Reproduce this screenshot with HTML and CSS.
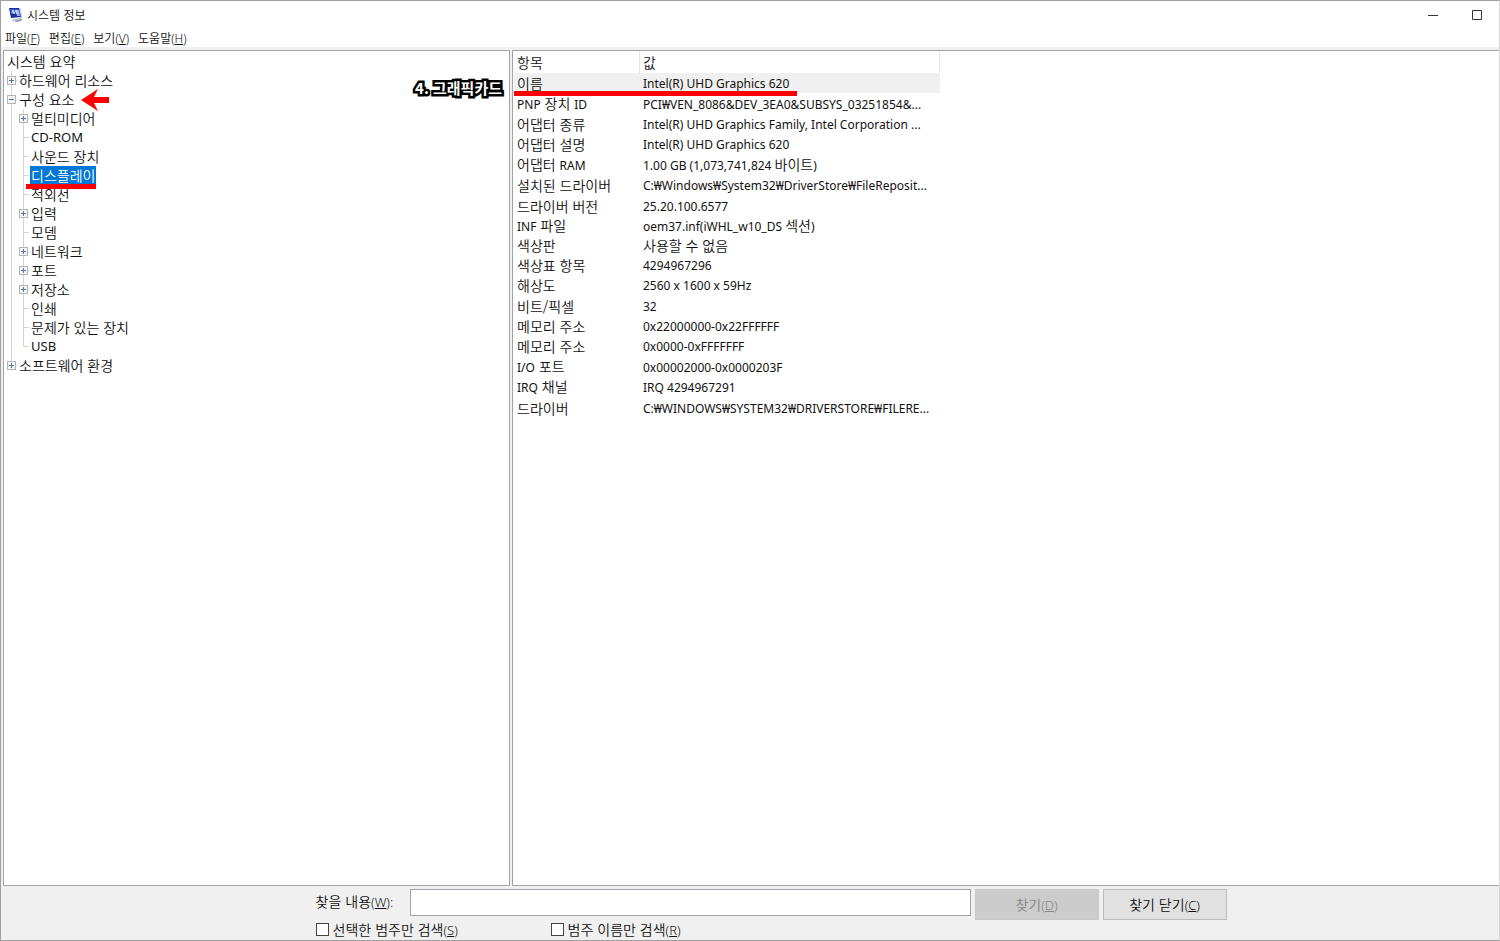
FILE: index.html
```html
<!DOCTYPE html>
<html lang="ko">
<head>
<meta charset="UTF-8">
<title>시스템 정보</title>
<link rel="stylesheet" href="styles.css">
</head>
<body>
<div class="window">
   <header class="titlebar">
      <svg class="app-icon" viewBox="0 0 16 16" width="16" height="16" aria-hidden="true">
         <path d="M5 12l8-1 2 2-6 2-5-1z" fill="#c3c7d2"/>
         <path d="M7 14l6-2 1 1-5 2z" fill="#8c90a4"/>
         <path d="M11 1l2 1 1 9-2 0z" fill="#c8cee4"/>
         <path d="M1 1l10 0 2 9-10 1z" fill="#1b2f9c"/>
         <path d="M2 2l8 0 1 4-8 1z" fill="#3558cf"/>
         <path d="M8 3l3 0 1 6-3 0z" fill="#8fb0f5"/>
         <path d="M4 6l1-3 1 4 2-4 1 4 1-2" fill="none" stroke="#d3e0ff"/>
      </svg>
      <h1>시스템 정보</h1>
      <div class="window-buttons">
         <button type="button" aria-label="최소화"><svg viewBox="0 0 12 12" width="12" height="12"><path d="M1 6.500h10" stroke="#333" fill="none"/></svg></button>
         <button type="button" aria-label="최대화"><svg viewBox="0 0 12 12" width="12" height="12"><path d="M1.500 1.500h9v9h-9z" stroke="#333" fill="none"/></svg></button>
      </div>
   </header>
   <nav class="menubar">
      <button type="button">파일<span class="key">(<u>F</u>)</span></button>
      <button type="button">편집<span class="key">(<u>E</u>)</span></button>
      <button type="button">보기<span class="key">(<u>V</u>)</span></button>
      <button type="button">도움말<span class="key">(<u>H</u>)</span></button>
   </nav>
   <main class="panes">
      <section class="pane tree-pane">
         <a class="root" href="#">시스템 요약</a>
         <ul class="tree">
            <li><button type="button" class="toggle" aria-label="펼치기"></button><a href="#">하드웨어 리소스</a></li>
            <li><button type="button" class="toggle open" aria-label="접기"></button><a href="#">구성 요소</a><svg class="arrow" viewBox="0 0 28 22" width="28" height="22" aria-hidden="true"><path d="M0 11L17 0L13 8H28V14H13L17 22Z" fill="#f00"/></svg>
               <ul class="tree">
                  <li><button type="button" class="toggle" aria-label="펼치기"></button><a href="#">멀티미디어</a></li>
                  <li><a href="#" class="latin">CD-ROM</a></li>
                  <li><a href="#">사운드 장치</a></li>
                  <li><a href="#" class="selected">디스플레이</a></li>
                  <li><a href="#">적외선</a></li>
                  <li><button type="button" class="toggle" aria-label="펼치기"></button><a href="#">입력</a></li>
                  <li><a href="#">모뎀</a></li>
                  <li><button type="button" class="toggle" aria-label="펼치기"></button><a href="#">네트워크</a></li>
                  <li><button type="button" class="toggle" aria-label="펼치기"></button><a href="#">포트</a></li>
                  <li><button type="button" class="toggle" aria-label="펼치기"></button><a href="#">저장소</a></li>
                  <li><a href="#">인쇄</a></li>
                  <li><a href="#">문제가 있는 장치</a></li>
                  <li><a href="#" class="latin">USB</a></li>
               </ul>
            </li>
            <li><button type="button" class="toggle" aria-label="펼치기"></button><a href="#">소프트웨어 환경</a></li>
         </ul>
         <p class="caption">4. 그래픽카드</p>
      </section>
      <section class="pane">
         <table class="details">
            <thead>
               <tr><th>항목</th><th>값</th></tr>
            </thead>
            <tbody>
               <tr class="current"><td>이름</td><td><span class="latin">Intel(R) UHD Graphics 620</span></td></tr>
               <tr><td><span class="latin">PNP</span> 장치 <span class="latin">ID</span></td><td><span class="latin">PCI₩VEN_8086&amp;DEV_3EA0&amp;SUBSYS_03251854&amp;...</span></td></tr>
               <tr><td>어댑터 종류</td><td><span class="latin">Intel(R) UHD Graphics Family, Intel Corporation ...</span></td></tr>
               <tr><td>어댑터 설명</td><td><span class="latin">Intel(R) UHD Graphics 620</span></td></tr>
               <tr><td>어댑터 <span class="latin">RAM</span></td><td><span class="latin">1.00 GB (1,073,741,824 </span>바이트<span class="latin">)</span></td></tr>
               <tr><td>설치된 드라이버</td><td><span class="latin">C:₩Windows₩System32₩DriverStore₩FileReposit...</span></td></tr>
               <tr><td>드라이버 버전</td><td><span class="latin">25.20.100.6577</span></td></tr>
               <tr><td><span class="latin">INF</span> 파일</td><td><span class="latin">oem37.inf(iWHL_w10_DS </span>섹션<span class="latin">)</span></td></tr>
               <tr><td>색상판</td><td>사용할 수 없음</td></tr>
               <tr><td>색상표 항목</td><td><span class="latin">4294967296</span></td></tr>
               <tr><td>해상도</td><td><span class="latin">2560 x 1600 x 59Hz</span></td></tr>
               <tr><td>비트/픽셀</td><td><span class="latin">32</span></td></tr>
               <tr><td>메모리 주소</td><td><span class="latin">0x22000000-0x22FFFFFF</span></td></tr>
               <tr><td>메모리 주소</td><td><span class="latin">0x0000-0xFFFFFFF</span></td></tr>
               <tr><td><span class="latin">I/O</span> 포트</td><td><span class="latin">0x00002000-0x0000203F</span></td></tr>
               <tr><td><span class="latin">IRQ</span> 채널</td><td><span class="latin">IRQ 4294967291</span></td></tr>
               <tr><td>드라이버</td><td><span class="latin">C:₩WINDOWS₩SYSTEM32₩DRIVERSTORE₩FILERE...</span></td></tr>
            </tbody>
         </table>
      </section>
   </main>
   <form class="search">
      <div class="search-row">
         <label for="find">찾을 내용<span class="key">(<u>W</u>):</span></label>
         <input type="text" id="find" name="find">
         <button type="button" disabled>찾기<span class="key">(<u>D</u>)</span></button>
         <button type="button">찾기 닫기<span class="key">(<u>C</u>)</span></button>
      </div>
      <div class="search-options">
         <label><input type="checkbox" name="selected">선택한 범주만 검색<span class="key">(<u>S</u>)</span></label>
         <label><input type="checkbox" name="names">범주 이름만 검색<span class="key">(<u>R</u>)</span></label>
      </div>
   </form>
</div>
</body>
</html>
```
FILE: styles.css
```css
* {
  box-sizing: border-box;
}
body {
  margin: 0;
  font-family: "Noto Sans CJK KR", sans-serif;
  font-size: 14px;
  font-weight: 350;
  line-height: 19px;
  color: #111;
}
button, input {
  font: inherit;
  color: inherit;
}
a {
  color: inherit;
  text-decoration: none;
}
ul {
  list-style: none;
  margin: 0;
  padding: 0;
}
.latin {
  font-family: "Noto Sans", "Noto Sans CJK KR", sans-serif;
  font-size: 12px;
  font-weight: 400;
}
.key {
  font-family: "Noto Sans", sans-serif;
  font-size: 12px;
}
.window {
  display: flex;
  flex-direction: column;
  height: 100vh;
  border: 1px solid #a0a0a0;
  border-right-color: #d8d8d8;
  background: #f0f0f0;
}
.titlebar {
  display: flex;
  align-items: center;
  height: 27px;
  padding-left: 7px;
  background: #fff;
}
.titlebar h1 {
  flex: 1;
  margin: 0 0 0 3px;
  font-size: 12px;
  font-weight: 350;
}
.window-buttons {
  display: flex;
  gap: 32px;
  padding-right: 16px;
}
.window-buttons button {
  display: flex;
  padding: 0;
  border: 0;
  background: none;
}
.menubar {
  display: flex;
  gap: 9px;
  height: 19px;
  padding-left: 4px;
  background: #fff;
}
.menubar button {
  padding: 0;
  border: 0;
  background: none;
  font-size: 12px;
}
.panes {
  display: flex;
  flex: 1;
  gap: 2px;
  min-height: 0;
  padding: 3px 0 0 2px;
}
.pane {
  position: relative;
  flex: 1;
  border: 1px solid #a0a4aa;
  border-right: 0;
  background: #fff;
}
.tree-pane {
  flex: 0 0 507px;
  padding-top: 1px;
  border-right: 1px solid #a0a4aa;
}
/* tree */
.root {
  display: block;
  padding-left: 3px;
}
.tree li {
  position: relative;
  padding-left: 14px;
}
.tree li::before {
  content: "";
  position: absolute;
  left: 7px;
  top: 0;
  bottom: 0;
  border-left: 1px solid #d4d4d4;
}
.tree li:last-child::before {
  bottom: auto;
  height: 10px;
}
.tree li::after {
  content: "";
  position: absolute;
  left: 7px;
  top: 9px;
  width: 6px;
  border-top: 1px solid #d4d4d4;
}
.tree .tree {
  margin-left: -2px;
}
.tree a {
  display: inline-block;
  height: 19px;
  padding: 0 1px;
  vertical-align: top;
}
.tree .latin {
  font-size: 13px;
}
.toggle {
  position: absolute;
  z-index: 1;
  left: 3px;
  top: 5px;
  width: 9px;
  height: 9px;
  padding: 0;
  border: 1px solid #b4b4b4;
  background:
    linear-gradient(#5a6fa8, #5a6fa8) center / 5px 1px no-repeat,
    linear-gradient(#5a6fa8, #5a6fa8) center / 1px 5px no-repeat,
    #f4f4f4;
}
.toggle.open {
  background: linear-gradient(#5a6fa8, #5a6fa8) center / 5px 1px no-repeat, #f4f4f4;
}
.tree .selected {
  position: relative;
  background: #0078d7;
  color: #fff;
}
.selected::after {
  content: "";
  position: absolute;
  z-index: 1;
  left: -4px;
  right: 0;
  top: 18px;
  height: 5px;
  background: #f00;
}
.arrow {
  position: absolute;
  left: 77px;
  top: -1px;
}
.caption {
  position: absolute;
  top: 27px;
  right: 7px;
  margin: 0;
  color: #fff;
  font-size: 15px;
  font-weight: 700;
  -webkit-text-stroke: 5px #000;
  paint-order: stroke fill;
}
/* details table */
.details {
  height: 367px;
  margin-left: 1px;
  border-spacing: 0;
  line-height: 18px;
}
.details th, .details td {
  padding: 0 0 0 3px;
  text-align: left;
  font-weight: 350;
  white-space: nowrap;
}
.details th {
  height: 22px;
  border-right: 1px solid #e5e5e5;
}
.details th:first-child {
  width: 126px;
}
.details th:last-child {
  width: 300px;
}
.current {
  position: relative;
  background: #f0f0f0;
}
.current td:first-child::after {
  content: "";
  position: absolute;
  left: 0;
  bottom: -3px;
  width: 283px;
  height: 5px;
  background: #f00;
}
/* search form */
.search {
  width: 911px;
  max-width: 79%;
  height: 54px;
  margin-left: 21%;
}
.search .key {
  font-size: 13px;
}
.search-row {
  display: flex;
  gap: 4px;
  padding-top: 3px;
}
.search-row label {
  width: 90px;
  padding-top: 3px;
}
.search-row input {
  flex: 1;
  min-width: 0;
  height: 27px;
  border: 1px solid #a0a4aa;
  background: #fff;
}
.search-row button {
  width: 124px;
  height: 31px;
  border: 1px solid #bbb;
  background: #e1e1e1;
}
.search-row button:disabled {
  border-color: #c8c8c8;
  background: #ccc;
  color: #888;
}
.search-options {
  display: flex;
}
.search-options label {
  width: 235px;
}
.search-options input {
  appearance: none;
  width: 13px;
  height: 13px;
  margin: 0 4px 0 0;
  border: 1px solid #444;
  background: #fff;
  vertical-align: -1px;
}
```
